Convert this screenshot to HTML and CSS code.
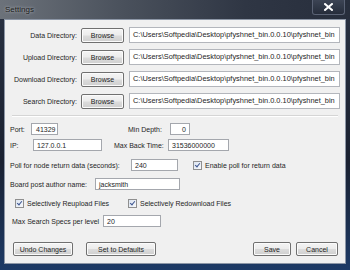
FILE: index.html
```html
<!DOCTYPE html>
<html lang="en">

<head>
  <meta charset="UTF-8">
  <title>Settings</title>
  <link rel="stylesheet" href="styles.css">
</head>

<body>
  <div class="window">
    <div class="titlebar">
      <span class="title">Settings</span>
      <div class="close">
        <svg width="9" height="8" viewBox="0 0 9 8">
          <path d="M1 1 L8 7 M8 1 L1 7" stroke="#fff" stroke-width="2" stroke-linecap="square" />
        </svg>
      </div>
    </div>

    <div class="client">
      <div class="dirs">
        <div class="dir-row">
          <span class="dir-label">Data Directory:</span>
          <button class="btn browse">Browse</button>
          <div class="field path">C:\Users\Softpedia\Desktop\pfyshnet_bin.0.0.10\pfyshnet_bin</div>
        </div>
        <div class="dir-row">
          <span class="dir-label">Upload Directory:</span>
          <button class="btn browse">Browse</button>
          <div class="field path">C:\Users\Softpedia\Desktop\pfyshnet_bin.0.0.10\pfyshnet_bin</div>
        </div>
        <div class="dir-row">
          <span class="dir-label">Download Directory:</span>
          <button class="btn browse">Browse</button>
          <div class="field path">C:\Users\Softpedia\Desktop\pfyshnet_bin.0.0.10\pfyshnet_bin</div>
        </div>
        <div class="dir-row">
          <span class="dir-label">Search Directory:</span>
          <button class="btn browse">Browse</button>
          <div class="field path">C:\Users\Softpedia\Desktop\pfyshnet_bin.0.0.10\pfyshnet_bin</div>
        </div>
      </div>

      <div class="separator"></div>

      <div class="form">
        <div class="row row-port">
          <span class="lbl w-port">Port:</span>
          <div class="field f-port">41329</div>
          <span class="lbl lbl-depth">Min Depth:</span>
          <div class="field f-depth">0</div>
        </div>
        <div class="row row-ip">
          <span class="lbl w-ip">IP:</span>
          <div class="field f-ip">127.0.0.1</div>
          <span class="lbl lbl-back">Max Back Time:</span>
          <div class="field f-back">31536000000</div>
        </div>
        <div class="row row-poll">
          <span class="lbl w-poll">Poll for node return data (seconds):</span>
          <div class="field f-poll">240</div>
          <label class="check check-poll"><span class="box"></span>Enable poll for return data</label>
        </div>
        <div class="row row-author">
          <span class="lbl w-author">Board post author name:</span>
          <div class="field f-author">jacksmith</div>
        </div>
        <div class="row row-checks">
          <label class="check check-reup"><span class="box"></span>Selectively Reupload Files</label>
          <label class="check"><span class="box"></span>Selectively Redownload Files</label>
        </div>
        <div class="row row-specs">
          <span class="lbl w-specs">Max Search Specs per level</span>
          <div class="field f-specs">20</div>
        </div>
      </div>

      <div class="actions">
        <button class="btn b-undo">Undo Changes</button>
        <button class="btn b-defaults">Set to Defaults</button>
        <span class="spacer"></span>
        <button class="btn b-save">Save</button>
        <button class="btn b-cancel">Cancel</button>
      </div>
    </div>
  </div>
</body>

</html>
```

FILE: styles.css
```css
body {
  margin: 0;
  padding: 0;
  font-family: "Liberation Sans", Arial, sans-serif;
  font-size: 7px;
  color: #1e1e1e;
  background-color: #1b2333;
}

.window {
  width: 350px;
  height: 270px;
  display: flex;
  flex-direction: column;
  background: linear-gradient(to bottom, #2a3242 0%, #1a2131 60%, #1d3a66 100%);
  overflow: hidden;
}

.titlebar {
  height: 19px;
  display: flex;
  align-items: flex-start;
  background: linear-gradient(to right, #6c727a 0%, #4a515c 35%, #2f3644 70%, #272e3c 100%);
}

.title {
  margin: 5px 0 0 5px;
  font-size: 8px;
  color: #1a1a1a;
  text-shadow: 0 0 3px #c8ccd2;
}

.close {
  margin-left: auto;
  margin-right: 5px;
  width: 31px;
  height: 14px;
  display: flex;
  align-items: center;
  justify-content: center;
  border: 1px solid #5a6274;
  border-top: none;
  border-radius: 0 0 3px 3px;
  background: linear-gradient(to bottom, #3c4454, #262d3b);
}

.client {
  flex: 1;
  margin: 0 4px 6px 4px;
  border: 1px solid #8c96a6;
  background-color: #f0f0f0;
  display: flex;
  flex-direction: column;
}

.dirs {
  padding: 7px 5px 0 0;
  display: flex;
  flex-direction: column;
  gap: 6px;
}

.dir-row {
  display: flex;
  align-items: center;
  height: 16px;
}

.dir-label {
  width: 72px;
  text-align: right;
}

.btn {
  font-family: inherit;
  font-size: 7px;
  color: #1e1e1e;
  padding: 0;
  border: 1px solid #707070;
  border-radius: 2px;
  background: linear-gradient(to bottom, #f4f4f4 0%, #ececec 48%, #dcdcdc 52%, #cfcfcf 100%);
  box-shadow: inset 0 0 0 1px #fbfbfb;
}

.browse {
  width: 43px;
  height: 15px;
  margin-left: 4px;
}

.field {
  height: 12px;
  line-height: 12px;
  box-sizing: border-box;
  padding: 0 3px;
  border: 1px solid #a4a7ad;
  background-color: #fff;
  white-space: nowrap;
  overflow: hidden;
}

.path {
  flex: 1;
  height: 16px;
  line-height: 14px;
  margin-left: 5px;
  font-size: 7.4px;
  border-color: #b3b6bc;
}

.separator {
  margin: 6px 7px 0 7px;
  border-top: 1px solid #d5d5d5;
  border-bottom: 1px solid #fff;
}

.form {
  padding-left: 5px;
  display: flex;
  flex-direction: column;
}

.row {
  display: flex;
  align-items: center;
  height: 12px;
}

.row-port { margin-top: 6px; }
.row-ip { margin-top: 4px; }
.row-poll { margin-top: 8px; }
.row-author { margin-top: 7px; }
.row-checks { margin-top: 7px; }
.row-specs { margin-top: 6px; }

.w-port { width: 21px; }
.w-ip { width: 23px; }
.w-poll { width: 121px; }
.w-author { width: 85px; }
.w-specs { width: 91px; margin-left: 2px; }

.f-port { width: 27px; padding-left: 4px; }
.f-depth { width: 20px; text-align: right; }
.f-ip { width: 69px; }
.f-back { width: 61px; }
.f-poll { width: 47px; }
.f-author { width: 85px; }
.f-specs { width: 58px; }

.lbl-depth {
  margin-left: 70px;
  width: 42px;
}

.lbl-back {
  margin-left: 12px;
  width: 54px;
}

.check {
  display: flex;
  align-items: center;
  gap: 3px;
}

.check-poll { margin-left: 15px; }

.check-reup {
  margin-left: 5px;
  width: 113px;
}

.box {
  width: 7px;
  height: 7px;
  border: 1px solid #8f8f8f;
  background: linear-gradient(135deg, #dce4f0, #f6f8fb);
  position: relative;
}

.box::after {
  content: "";
  position: absolute;
  left: 2px;
  top: 0;
  width: 2px;
  height: 4px;
  border: solid #3d5590;
  border-width: 0 1px 1px 0;
  transform: rotate(40deg);
}

.actions {
  margin-top: auto;
  margin-bottom: 7px;
  padding: 0 7px 0 8px;
  display: flex;
  align-items: center;
  height: 14px;
}

.actions .btn { height: 14px; }

.b-undo { width: 60px; }
.b-defaults { width: 70px; margin-left: 13px; }
.spacer { flex: 1; }
.b-save { width: 38px; }
.b-cancel { width: 42px; margin-left: 5px; }
```
